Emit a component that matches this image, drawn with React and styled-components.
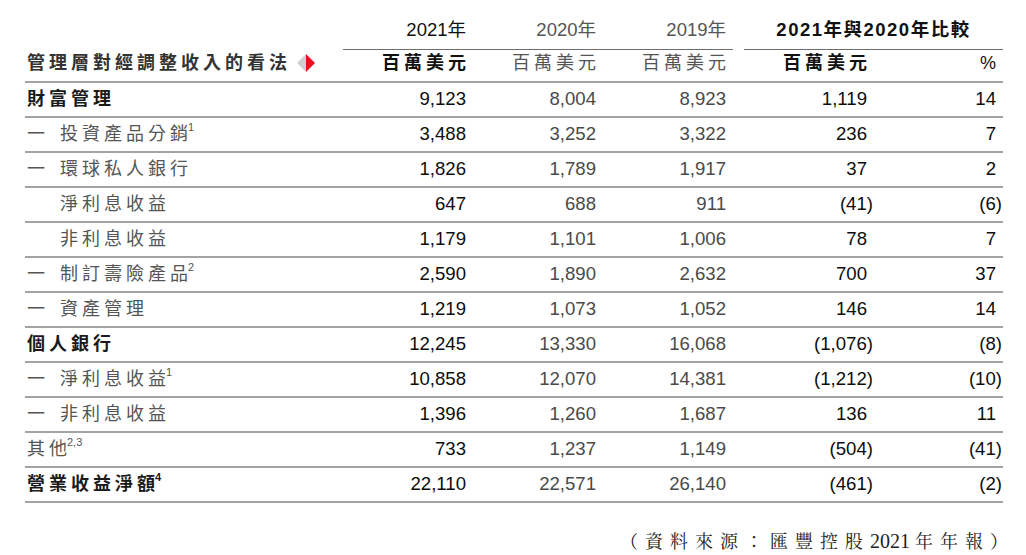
import React from 'react';
import styled, { createGlobalStyle } from 'styled-components';

const GlobalStyle = createGlobalStyle`
  html, body {
    margin: 0;
    padding: 0;
    background: #fff;
  }
  body {
    font-family: 'Liberation Sans', 'Noto Sans CJK TC', sans-serif;
    color: #222;
  }
`;

const CJK = `'Liberation Sans', 'Noto Sans CJK TC', sans-serif`;

let Page = styled.div`
  width: 978px;
  padding: 12px 0 0 25px;
`;

let Table = styled.div`
  display: flex;
  flex-direction: column;
`;

let Row = styled.div`
  display: grid;
  grid-template-columns: 318px 130px 130px 130px 11px 130px 129px;
  align-items: center;
  height: ${(p) => p.$h || 33}px;
  border-bottom: ${(p) => (p.$rule ? '2px solid #a3a3a3' : 'none')};
`;

let YearHead = styled.div`
  grid-column: ${(p) => p.$span || 'auto'};
  height: 100%;
  display: flex;
  align-items: center;
  justify-content: ${(p) => (p.$center ? 'center' : 'flex-end')};
  padding-right: ${(p) => (p.$center ? 0 : 7)}px;
  padding-bottom: 0;
  border-bottom: 1px solid #6d6d6d;
  font-family: ${CJK};
  font-size: 18.5px;
  line-height: 1;
  color: ${(p) => (p.$dark ? '#111' : '#555')};
  font-weight: ${(p) => (p.$bold ? 700 : 400)};
  letter-spacing: ${(p) => (p.$bold ? '1.5px' : '0')};
  box-sizing: border-box;
`;

let Blank = styled.div`
  grid-column: ${(p) => p.$span || 'auto'};
`;

let Unit = styled.div`
  text-align: right;
  padding-right: 7px;
  padding-bottom: 5px;
  font-family: ${CJK};
  font-size: 18px;
  line-height: 1;
  letter-spacing: ${(p) => (p.$tight ? 0 : 4)}px;
  margin-right: ${(p) => (p.$tight ? 0 : -4)}px;
  color: ${(p) => (p.$dark ? '#111' : '#555')};
  font-weight: ${(p) => (p.$bold ? 700 : 400)};
`;

let Heading = styled.div`
  display: flex;
  align-items: center;
  padding-left: 2px;
  padding-bottom: 5px;
  font-family: ${CJK};
  font-size: 18px;
  line-height: 1;
  font-weight: 700;
  letter-spacing: 4px;
  color: #333;
`;

let Diamond = styled.svg`
  margin-left: 6px;
  flex: none;
`;

let Label = styled.div`
  display: flex;
  align-items: flex-start;
  padding-left: ${(p) => (p.$level === 2 ? 35 : 2)}px;
  padding-bottom: 1px;
  font-family: ${CJK};
  font-size: 18px;
  line-height: 1;
  letter-spacing: 4px;
  white-space: nowrap;
  font-weight: ${(p) => (p.$bold ? 700 : 400)};
  color: ${(p) => (p.$bold ? '#1a1a1a' : '#555')};
`;

let Dash = styled.span`
  display: inline-block;
  width: 33px;
  flex: none;
`;

let Sup = styled.span`
  font-family: 'Liberation Sans', sans-serif;
  font-size: 11px;
  line-height: 1;
  letter-spacing: 0;
  margin-left: -4px;
  margin-top: -3px;
  font-weight: ${(p) => (p.$bold ? 700 : 400)};
`;

let Num = styled.div`
  text-align: right;
  padding-right: ${(p) => (p.$hang ? 1 : 7)}px;
  padding-bottom: 1px;
  font-family: 'Liberation Sans', Arial, sans-serif;
  font-size: 18.6px;
  line-height: 1;
  color: ${(p) => (p.$dark ? '#0d0d0d' : '#4a4a4a')};
`;

let Source = styled.div`
  margin-top: 28px;
  margin-right: -12px;
  text-align: right;
  font-family: 'Noto Serif CJK TC', 'Liberation Serif', 'Noto Sans CJK TC', serif;
  font-size: 18px;
  line-height: 1;
  letter-spacing: 7px;
  color: #222;
`;

let Digits = styled.span`
  font-family: 'Liberation Serif', serif;
  font-size: 20px;
  letter-spacing: 0;
  margin-right: 5px;
`;

const rows = [
  { label: '財富管理', level: 0, bold: true, v: ['9,123', '8,004', '8,923', '1,119', '14'] },
  { label: '投資產品分銷', sup: '1', level: 1, v: ['3,488', '3,252', '3,322', '236', '7'] },
  { label: '環球私人銀行', level: 1, v: ['1,826', '1,789', '1,917', '37', '2'] },
  { label: '淨利息收益', level: 2, v: ['647', '688', '911', '(41)', '(6)'] },
  { label: '非利息收益', level: 2, v: ['1,179', '1,101', '1,006', '78', '7'] },
  { label: '制訂壽險產品', sup: '2', level: 1, v: ['2,590', '1,890', '2,632', '700', '37'] },
  { label: '資產管理', level: 1, v: ['1,219', '1,073', '1,052', '146', '14'] },
  { label: '個人銀行', level: 0, bold: true, v: ['12,245', '13,330', '16,068', '(1,076)', '(8)'] },
  { label: '淨利息收益', sup: '1', level: 1, v: ['10,858', '12,070', '14,381', '(1,212)', '(10)'] },
  { label: '非利息收益', level: 1, v: ['1,396', '1,260', '1,687', '136', '11'] },
  { label: '其他', sup: '2,3', level: 0, v: ['733', '1,237', '1,149', '(504)', '(41)'] },
  { label: '營業收益淨額', sup: '4', level: 0, bold: true, v: ['22,110', '22,571', '26,140', '(461)', '(2)'] },
];

// 2021 and the two comparison columns are printed darker
const darkCols = [true, false, false, true, true];

function App() {
  return (
    <Page>
      <GlobalStyle />
      <Table>
        <Row $h={38}>
          <Blank />
          <YearHead $dark>2021年</YearHead>
          <YearHead>2020年</YearHead>
          <YearHead>2019年</YearHead>
          <Blank />
          <YearHead $span="span 2" $center $dark $bold>2021年與2020年比較</YearHead>
        </Row>
        <Row $h={31} $rule>
          <Heading>
            管理層對經調整收入的看法
            <Diamond width="18" height="18" viewBox="0 0 18 18">
              <polygon points="9,0 0,9 9,18" fill="#cfcfcf" />
              <polygon points="9,0 18,9 9,18" fill="#e8101e" />
            </Diamond>
          </Heading>
          <Unit $dark $bold>百萬美元</Unit>
          <Unit>百萬美元</Unit>
          <Unit>百萬美元</Unit>
          <Blank />
          <Unit $dark $bold>百萬美元</Unit>
          <Unit $dark $tight>%</Unit>
        </Row>
        {rows.map((r, i) => (
          <Row key={i} $rule>
            <Label $level={r.level} $bold={r.bold}>
              {r.level === 1 && <Dash>一</Dash>}
              {r.label}
              {r.sup && <Sup $bold={r.bold}>{r.sup}</Sup>}
            </Label>
            {r.v.slice(0, 3).map((v, j) => (
              <Num key={j} $dark={darkCols[j]} $hang={v.startsWith('(')}>{v}</Num>
            ))}
            <Blank />
            {r.v.slice(3).map((v, j) => (
              <Num key={j} $dark={darkCols[j + 3]} $hang={v.startsWith('(')}>{v}</Num>
            ))}
          </Row>
        ))}
      </Table>
      <Source>
        （資料來源：匯豐控股<Digits>2021</Digits>年年報）
      </Source>
    </Page>
  );
}

export default App;
